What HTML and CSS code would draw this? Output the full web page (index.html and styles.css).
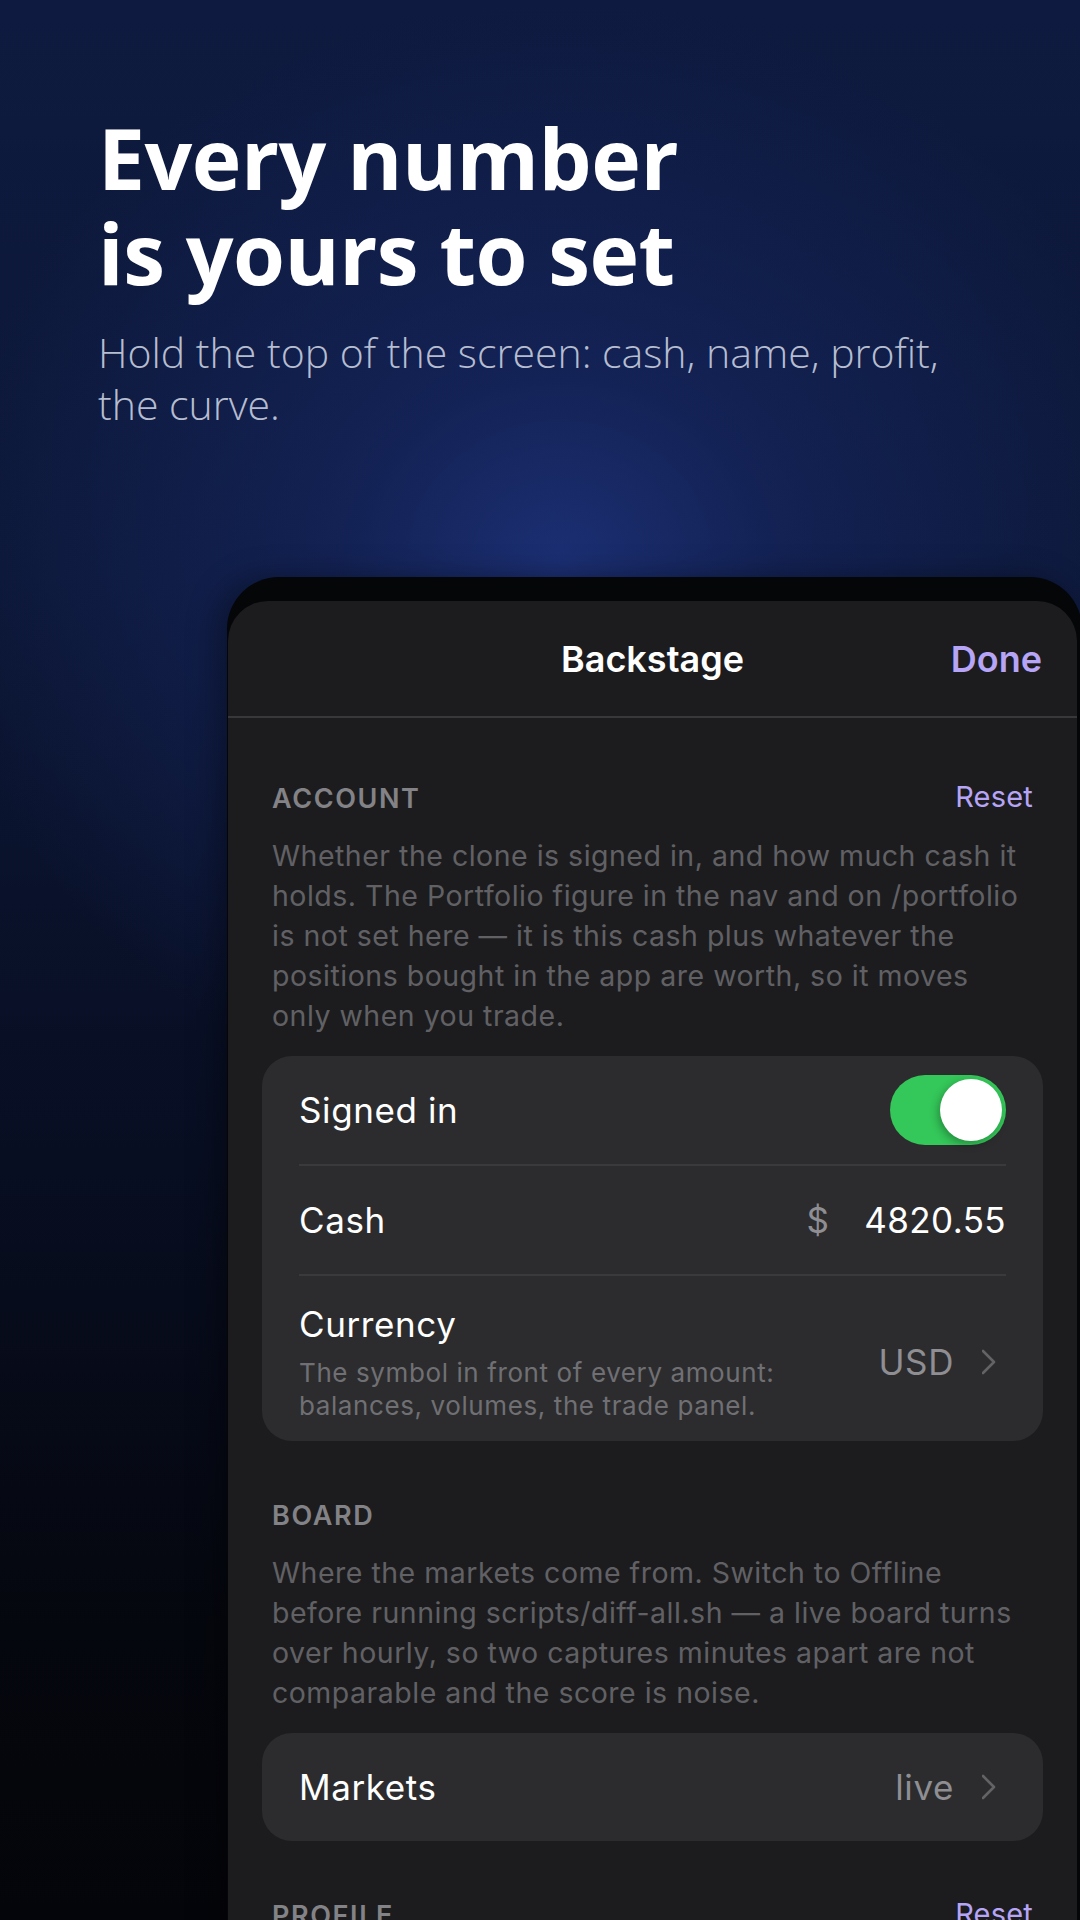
FILE: index.html
```html
<!DOCTYPE html>
<html lang="en">
<head>
  <meta charset="UTF-8" />
  <meta name="viewport" content="width=device-width, initial-scale=1.0"/>
  <title>Backstage</title>
  <link rel="stylesheet" href="styles.css">
</head>
<body>
  <div class="hero">
    <h1>Every number<br>is yours to set</h1>
    <p class="hero-sub">Hold the top of the screen: cash, name, profit, the curve.</p>
  </div>

  <div class="phone">
    <div class="sheet">
      <div class="sheet-header">
        <span></span>
        <span class="sheet-title">Backstage</span>
        <span class="done">Done</span>
      </div>

      <div class="sheet-body">
        <div class="section first">
          <div class="section-head">
            <span class="section-label">ACCOUNT</span>
            <span class="reset">Reset</span>
          </div>
          <p class="section-desc">Whether the clone is signed in, and how much cash it holds. The Portfolio figure in the nav and on /portfolio is not set here — it is this cash plus whatever the positions bought in the app are worth, so it moves only when you trade.</p>
          <div class="card">
            <div class="row">
              <span class="row-label">Signed in</span>
              <span class="toggle on"><span class="knob"></span></span>
            </div>
            <div class="row">
              <span class="row-label">Cash</span>
              <span class="money">
                <span class="money-sign">$</span>
                <span class="money-value">4820.55</span>
              </span>
            </div>
            <div class="row tall">
              <div class="row-text">
                <div class="row-label">Currency</div>
                <div class="row-hint">The symbol in front of every amount: balances, volumes, the trade panel.</div>
              </div>
              <span class="row-value">USD
                <svg class="chev" viewBox="0 0 24 28" width="24" height="28"><path d="M1 3 L12 14 L1 25" fill="none" stroke="#636366" stroke-width="2.6" stroke-linecap="round" stroke-linejoin="round"/></svg>
              </span>
            </div>
          </div>
        </div>

        <div class="section">
          <div class="section-head">
            <span class="section-label">BOARD</span>
          </div>
          <p class="section-desc">Where the markets come from. Switch to Offline before running scripts/diff-all.sh — a live board turns over hourly, so two captures minutes apart are not comparable and the score is noise.</p>
          <div class="card">
            <div class="row">
              <span class="row-label">Markets</span>
              <span class="row-value">live
                <svg class="chev" viewBox="0 0 24 28" width="24" height="28"><path d="M1 3 L12 14 L1 25" fill="none" stroke="#636366" stroke-width="2.6" stroke-linecap="round" stroke-linejoin="round"/></svg>
              </span>
            </div>
          </div>
        </div>

        <div class="section">
          <div class="section-head">
            <span class="section-label">PROFILE</span>
            <span class="reset">Reset</span>
          </div>
        </div>
      </div>
    </div>
  </div>
</body>
</html>
```

FILE: styles.css
```css
html, body {
  margin: 0;
  padding: 0;
}

body {
  width: 1080px;
  height: 1920px;
  overflow: hidden;
  font-family: 'Open Sans', sans-serif;
  color: #fff;
  background:
    radial-gradient(ellipse 620px 560px at 560px 560px, rgba(28, 48, 118, 0.95) 0%, rgba(22, 38, 96, 0.7) 35%, rgba(14, 26, 66, 0) 100%),
    linear-gradient(to bottom, #0e1a3f 0%, #0c1736 30%, #080e22 60%, #05070e 85%, #04050a 100%);
}

.hero {
  padding: 110px 0 0 98px;
}

h1 {
  margin: 0;
  font-size: 84px;
  line-height: 95px;
  font-weight: 700;
  letter-spacing: -0.5px;
}

.hero-sub {
  margin: 26px 0 0;
  width: 880px;
  font-size: 41px;
  line-height: 52px;
  font-weight: 300;
  color: #b6bdd0;
}

.phone {
  margin: 147px 0 0 227px;
  width: 855px;
  height: 1400px;
  padding: 24px 5px 0 1px;
  box-sizing: border-box;
  background: #050608;
  border-radius: 52px 52px 0 0;
  box-shadow: -10px 0 30px rgba(0, 0, 0, 0.35);
}

.sheet {
  height: 100%;
  background: #1c1c1e;
  border-radius: 40px 40px 0 0;
  font-family: 'Inter', sans-serif;
}

.sheet-header {
  height: 115px;
  display: grid;
  grid-template-columns: 1fr auto 1fr;
  align-items: center;
  padding: 0 35px;
  border-bottom: 2px solid #38383a;
}

.sheet-title {
  font-size: 36px;
  font-weight: 600;
  color: #fff;
}

.done {
  justify-self: end;
  font-size: 36px;
  font-weight: 600;
  color: #b6a4f6;
}

.sheet-body {
  padding: 0 34px;
}

.section {
  margin-top: 60px;
}

.section.first {
  margin-top: 66px;
}

.section-head {
  display: flex;
  justify-content: space-between;
  align-items: center;
  padding: 0 10px;
  height: 30px;
}

.section-label {
  font-size: 27px;
  line-height: 30px;
  font-weight: 600;
  letter-spacing: 1.6px;
  color: #838387;
}

.reset {
  margin-top: -5px;
  font-size: 29px;
  letter-spacing: 0.2px;
  color: #b6a4f6;
}

.section-desc {
  margin: 22px 0 20px;
  padding: 0 10px;
  font-size: 28.5px;
  line-height: 40px;
  letter-spacing: 0.5px;
  color: #616165;
}

.card {
  background: #2c2c2e;
  border-radius: 30px;
  padding: 0 37px;
}

.row {
  min-height: 110px;
  display: flex;
  align-items: center;
  justify-content: space-between;
  box-sizing: border-box;
  border-bottom: 2px solid #3a3a3c;
}

.row:last-child {
  border-bottom: none;
  min-height: 108px;
}

.row.tall {
  padding: 26px 0 19px;
}

.row-label {
  font-size: 35px;
  line-height: 44px;
  letter-spacing: 0.6px;
  color: #fff;
}

.row-hint {
  margin-top: 10px;
  max-width: 560px;
  font-size: 26px;
  line-height: 33px;
  letter-spacing: 0.6px;
  color: #707074;
}

.row-value {
  display: flex;
  align-items: center;
  gap: 28px;
  font-size: 35px;
  letter-spacing: 0.6px;
  color: #8e8e93;
}

.chev {
  display: block;
}

.money {
  display: flex;
  align-items: center;
  gap: 35px;
  font-size: 35px;
  letter-spacing: 0.4px;
}

.money-sign {
  color: #8e8e93;
}

.money-value {
  color: #fff;
}

.toggle {
  position: relative;
  width: 116px;
  height: 70px;
  border-radius: 35px;
  background: #3a3a3c;
}

.toggle.on {
  background: #34c759;
}

.knob {
  position: absolute;
  top: 4px;
  right: 4px;
  width: 62px;
  height: 62px;
  border-radius: 50%;
  background: #fff;
  box-shadow: -2px 3px 8px rgba(0, 0, 0, 0.3);
}
```
